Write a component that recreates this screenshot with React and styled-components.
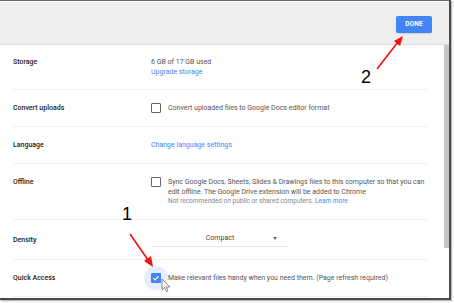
import styled, { createGlobalStyle } from "styled-components";

const GlobalStyle = createGlobalStyle`
   html, body {
      margin: 0;
      padding: 0;
      background: #fafafa;
      font-family: Roboto, "Liberation Sans", Arial, sans-serif;
   }
`;

const Page = styled.div`
   width: 454px;
   height: 303px;
   position: relative;
   overflow: hidden;
`;

const Window = styled.div`
   width: 449px;
   height: 297px;
   background: #fff;
   border-top: 1px solid #666;
   border-right: 2px solid #4a4a4a;
   border-bottom: 2px solid #4a4a4a;
   box-shadow: 1px 1px 1px rgba(0, 0, 0, 0.25);
   display: flex;
   flex-direction: column;
   overflow: hidden;
`;

const Header = styled.header`
   height: 42px;
   margin-top: 1px;
   background: #eeeeee;
   border-bottom: 1px solid #dcdcdc;
   display: flex;
   justify-content: flex-end;
   align-items: center;
   padding-right: 17px;
   flex-shrink: 0;
`;

const DoneButton = styled.button`
   width: 36px;
   height: 17px;
   background: #4285f4;
   color: #fff;
   border: none;
   border-radius: 2px;
   font-family: inherit;
   font-size: 6.5px;
   font-weight: 700;
   letter-spacing: 0.2px;
   padding: 0;
   margin-top: 2px;
   box-shadow: 0 1px 1px rgba(0, 0, 0, 0.12);
`;

const Body = styled.div`
   flex: 1;
   display: flex;
`;

const Content = styled.div`
   flex: 1;
   padding: 0 15px 0 13px;
`;

const Scrollbar = styled.div`
   width: 5px;
   display: flex;
   flex-direction: column;
`;

const Thumb = styled.div`
   height: 203px;
   background: #c6c6c6;
`;

const Row = styled.div`
   display: flex;
   align-items: ${(p) => (p.$top ? "flex-start" : "center")};
   padding: ${(p) => p.$pad || "13px"} 0;
   border-bottom: 1px solid #f1f1f1;
   font-size: 7px;
   line-height: 10px;
`;

const Label = styled.div`
   width: 138px;
   flex-shrink: 0;
   font-weight: 500;
   color: #222;
`;

const Value = styled.div`
   color: #555;
`;

const Link = styled.div`
   color: #4285f4;
`;

const Note = styled.div`
   color: #888;
   font-size: 6.5px;
   line-height: 9px;
`;

const InlineLink = styled.span`
   color: #4285f4;
`;

const CheckLine = styled.div`
   display: flex;
   align-items: flex-start;
   gap: 7px;
   color: #555;
`;

const Halo = styled.span`
   position: relative;
   flex-shrink: 0;
   width: 10px;
   height: 10px;

   &::before {
      content: "";
      display: ${(p) => (p.$on ? "block" : "none")};
      position: absolute;
      left: -7px;
      top: -7px;
      width: 24px;
      height: 24px;
      border-radius: 50%;
      background: #e3edfd;
   }
`;

const Box = styled.span`
   position: relative;
   width: 10px;
   height: 10px;
   box-sizing: border-box;
   border-radius: 1px;
   border: ${(p) => (p.$checked ? "none" : "1.5px solid #666")};
   background: ${(p) => (p.$checked ? "#4285f4" : "#fff")};
   display: flex;
   align-items: center;
   justify-content: center;
`;

const CheckText = styled.div`
   max-width: 262px;
`;

const Select = styled.div`
   width: 138px;
   box-sizing: border-box;
   display: flex;
   align-items: center;
   justify-content: center;
   position: relative;
   padding-bottom: 3px;
   border-bottom: 1px solid #e6e6e6;
   color: #444;
   margin-top: 1px;
`;

const Caret = styled.span`
   position: absolute;
   right: 12px;
   top: 4px;
   width: 0;
   height: 0;
   border-left: 2.5px solid transparent;
   border-right: 2.5px solid transparent;
   border-top: 3px solid #666;
`;

const Callout = styled.div`
   position: absolute;
   left: ${(p) => p.$x}px;
   top: ${(p) => p.$y}px;
   font-family: "Liberation Sans", Arial, sans-serif;
   font-size: 18px;
   line-height: 18px;
   color: #000;
`;

const Overlay = styled.svg`
   position: absolute;
   left: 0;
   top: 0;
   pointer-events: none;
`;

function Checkbox({ checked, focus }) {
   return (
      <Halo $on={focus}>
         <Box $checked={checked}>
            {checked && (
               <svg width="8" height="8" viewBox="0 0 8 8">
                  <path d="M1.5 4.2 L3.2 5.8 L6.6 2.2" fill="none" stroke="#fff" strokeWidth="1.2" />
               </svg>
            )}
         </Box>
      </Halo>
   );
}

export default function App() {
   return (
      <Page>
         <GlobalStyle />
         <Window>
            <Header>
               <DoneButton>DONE</DoneButton>
            </Header>
            <Body>
               <Content>
                  <Row $top $pad="12px">
                     <Label>Storage</Label>
                     <div>
                        <Value>6 GB of 17 GB used</Value>
                        <Link>Upgrade storage</Link>
                     </div>
                  </Row>
                  <Row>
                     <Label>Convert uploads</Label>
                     <CheckLine>
                        <Checkbox />
                        <CheckText>Convert uploaded files to Google Docs editor format</CheckText>
                     </CheckLine>
                  </Row>
                  <Row>
                     <Label>Language</Label>
                     <Link>Change language settings</Link>
                  </Row>
                  <Row $top>
                     <Label>Offline</Label>
                     <CheckLine>
                        <Checkbox />
                        <CheckText>
                           Sync Google Docs, Sheets, Slides &amp; Drawings files to this computer so that you can
                           edit offline. The Google Drive extension will be added to Chrome
                           <Note>
                              Not recommended on public or shared computers. <InlineLink>Learn more</InlineLink>
                           </Note>
                        </CheckText>
                     </CheckLine>
                  </Row>
                  <Row $pad="12px">
                     <Label>Density</Label>
                     <Select>
                        Compact
                        <Caret />
                     </Select>
                  </Row>
                  <Row>
                     <Label>Quick Access</Label>
                     <CheckLine>
                        <Checkbox checked focus />
                        <CheckText>Make relevant files handy when you need them. (Page refresh required)</CheckText>
                     </CheckLine>
                  </Row>
               </Content>
               <Scrollbar>
                  <Thumb />
               </Scrollbar>
            </Body>
         </Window>

         <Callout $x={361} $y={68}>2</Callout>
         <Callout $x={122} $y={205}>1</Callout>

         <Overlay width="454" height="303" viewBox="0 0 454 303">
            <line x1="377" y1="69" x2="398" y2="42" stroke="#f01010" strokeWidth="1.6" />
            <polygon points="403,36 394,41 400,46" fill="#f01010" />
            <line x1="130" y1="234" x2="148" y2="260" stroke="#f01010" strokeWidth="1.6" />
            <polygon points="153,267 144,261 151,256" fill="#f01010" />
            <path
               d="M162 279 L162 290 L164.6 287.6 L166.4 291.6 L168 290.9 L166.3 287 L169.8 287 Z"
               fill="#fff"
               stroke="#555"
               strokeWidth="0.7"
            />
         </Overlay>
      </Page>
   );
}
